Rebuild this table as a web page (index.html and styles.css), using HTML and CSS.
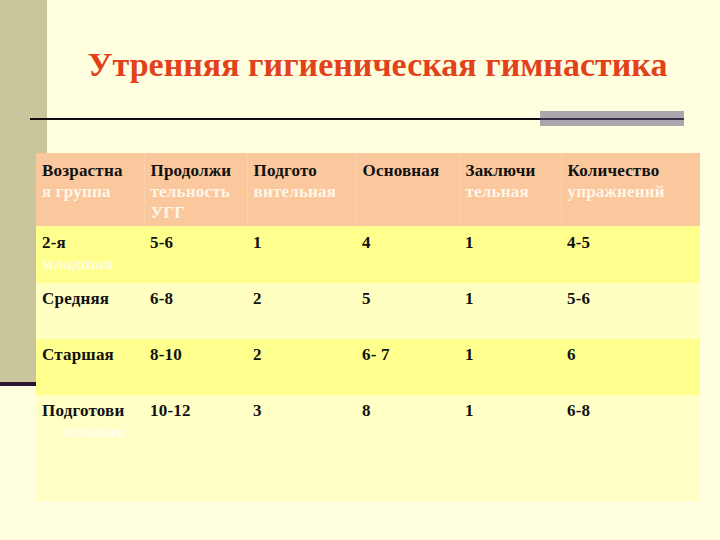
FILE: index.html
```html
<!DOCTYPE html>
<html lang="ru">
<head>
<meta charset="utf-8">
<title>Утренняя гигиеническая гимнастика</title>
<link rel="stylesheet" href="styles.css">
</head>
<body>
<div class="slide">
  <h1 class="title">Утренняя гигиеническая гимнастика</h1>
  <div class="rule"><div class="rule-line"></div><div class="rule-box"><div class="rule-box-line"></div></div></div>
  <table class="grid">
    <colgroup>
      <col class="c1"><col class="c2"><col class="c3"><col class="c4"><col class="c5"><col class="c6">
    </colgroup>
    <tr class="head">
      <td>Возрастна<br><span class="pale">я группа</span></td>
      <td>Продолжи<br><span class="pale">тельность<br>УГГ</span></td>
      <td>Подгото<br><span class="pale">вительная</span></td>
      <td>Основная</td>
      <td>Заключи<br><span class="pale">тельная</span></td>
      <td>Количество<br><span class="pale">упражнений</span></td>
    </tr>
    <tr class="row dark r1">
      <td>2-я<br><span class="pale">младшая</span></td>
      <td>5-6</td><td>1</td><td>4</td><td>1</td><td>4-5</td>
    </tr>
    <tr class="row light r2">
      <td>Средняя</td>
      <td>6-8</td><td>2</td><td>5</td><td>1</td><td>5-6</td>
    </tr>
    <tr class="row dark r3">
      <td>Старшая</td>
      <td>8-10</td><td>2</td><td>6- 7</td><td>1</td><td>6</td>
    </tr>
    <tr class="row last r4">
      <td>Подготови<br><span class="faint">тельная</span></td>
      <td>10-12</td><td>3</td><td>8</td><td>1</td><td>6-8</td>
    </tr>
  </table>
</div>
</body>
</html>
```
FILE: styles.css
```css
html, body {
  margin: 0;
  padding: 0;
}
body {
  width: 720px;
  height: 540px;
  overflow: hidden;
  background-color: #ffffdf;
  background-image:
    linear-gradient(#2b1430, #2b1430),
    linear-gradient(#c8c69a, #c8c69a);
  background-repeat: no-repeat;
  background-position: 0 382px, 0 0;
  background-size: 47px 4px, 47px 382px;
  font-family: "Liberation Serif", "Times New Roman", serif;
}
.slide {
  display: flex;
  flex-direction: column;
  width: 720px;
  height: 540px;
}
.title {
  margin: 0;
  padding: 45px 12px 0 47px;
  height: 66px;
  box-sizing: border-box;
  text-align: center;
  font-size: 34px;
  font-weight: bold;
  line-height: 40px;
  color: #e2421b;
  white-space: nowrap;
}
.rule {
  display: flex;
  align-items: center;
  margin: 0 0 0 30px;
  width: 654px;
  height: 15px;
  margin-top: 45px;
}
.rule-line {
  flex: 1;
  height: 2px;
  background: #140a14;
}
.rule-box {
  width: 144px;
  height: 15px;
  background: #aba6ae;
  display: flex;
  align-items: center;
}
.rule-box-line {
  flex: 1;
  height: 2px;
  background: #3a2f48;
}
.grid {
  margin: 27px 0 0 36px;
  width: 664px;
  border-collapse: collapse;
  table-layout: fixed;
  font-size: 17px;
  font-weight: bold;
  line-height: 21px;
  color: #111;
  letter-spacing: 0.2px;
}
.c1 { width: 108px; }
.c2 { width: 103px; }
.c3 { width: 109px; }
.c4 { width: 103px; }
.c5 { width: 102px; }
.c6 { width: 139px; }
.grid td {
  vertical-align: top;
  padding: 0 0 0 6px;
  white-space: nowrap;
  overflow: hidden;
}
.head td {
  background: #fac89c;
  height: 73px;
  padding-top: 7px;
  box-sizing: border-box;
  border-left: 1px solid #fbd2ac;
}
.head td:first-child { border-left: none; }
.row td {
  padding-top: 5px;
  box-sizing: border-box;
}
.dark td { background: #ffff8e; }
.light td { background: #ffffc2; }
.last td { background: #ffffc6; }
.r1 td { height: 57px; padding-top: 6px; }
.r2 td { height: 56px; }
.r3 td { height: 56px; }
.r4 td { height: 106px; }
.pale { color: #fff6ea; }
.r1 .pale { color: #fffde0; }
.faint { color: #fffff0; padding-left: 20px; }
```
